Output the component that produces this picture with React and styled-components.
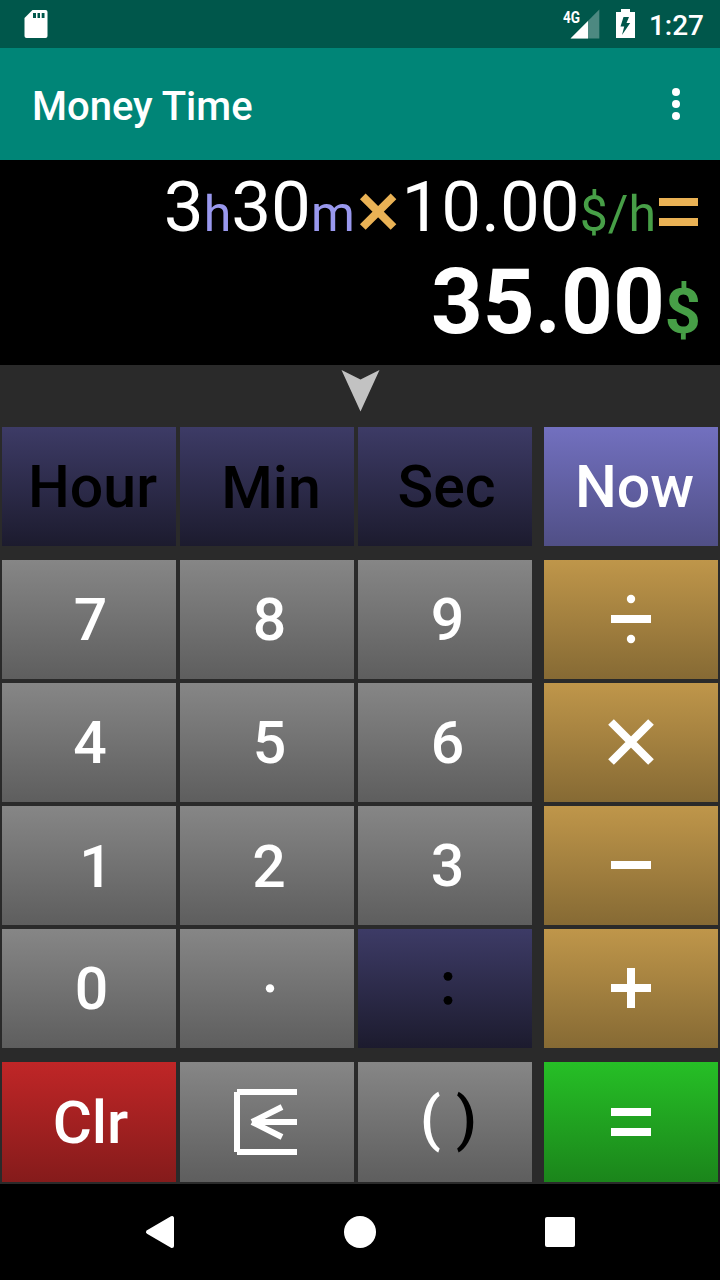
import React from 'react'
import styled, { createGlobalStyle } from 'styled-components'

const gradients = {
  gray: '#868686, #5e5e5e',
  dim: '#3d3b66, #1c1b2e',
  now: '#7270bf, #504f86',
  gold: '#bf964a, #866a34',
  red: '#c02627, #851b1b',
  green: '#26bf26, #1b851b',
}

const CalcKey = ({ tone = 'gray', text, x, y, dark, tall, children }) => (
  <Key $tone={tone} $dark={dark} $tall={tall}>
    {text ? (
      <Label $x={x} $y={y} $big={text === 'Clr'}>
        {text}
      </Label>
    ) : (
      children
    )}
  </Key>
)

const Sign = ({ d }) => (
  <svg width="60" height="60" viewBox="-30 -30 60 60">
    <path d={d} stroke="currentColor" strokeWidth="8" fill="none" />
  </svg>
)

const App = () => {
  return (
    <>
      <GlobalStyle />
      <Screen>
        <StatusBar>
          <svg width="24" height="28" viewBox="0 0 24 28">
            <path
              d="M8.500 0H21.500a2 2 0 0 1 2 2v24a2 2 0 0 1-2 2H2.500a2 2 0 0 1-2-2V8z"
              fill="#fff"
            />
            <path d="M9 3h3v5H9zM13.500 3h2.500v5h-2.500zM17.700 3h2.800v5h-2.800z" fill="#00574b" />
          </svg>
          <StatusRight>
            <SignalBox>
              <Network>4G</Network>
              <svg width="30" height="30" viewBox="0 0 30 30">
                <path d="M29.300 0.500V29.500H0.500z" fill="#fff" opacity="0.3" />
                <path d="M18 12V29.500H0.500z" fill="#fff" />
              </svg>
            </SignalBox>
            <svg width="19" height="30" viewBox="0 0 19 30">
              <path d="M5 0h9v3h5v26H0V3h5z" fill="#fff" />
              <path d="M7.500 8L4.500 17.500H8.200L6 26 14.200 14H10.500L13 8z" fill="#00574b" />
            </svg>
            <Clock>1:27</Clock>
          </StatusRight>
        </StatusBar>

        <AppBar>
          <Title>Money Time</Title>
          <svg width="8" height="32" viewBox="0 0 8 32">
            <circle cx="4" cy="4" r="4" fill="#fff" />
            <circle cx="4" cy="16" r="4" fill="#fff" />
            <circle cx="4" cy="28" r="4" fill="#fff" />
          </svg>
        </AppBar>

        <Display>
          <Expression>
            <span>3</span>
            <Unit $color="#9998ee">h</Unit>
            <span>30</span>
            <Unit $color="#9998ee">m</Unit>
            <Operator width="46.5" height="38" viewBox="0 0 46.5 38">
              <path d="M7.800 3.300L38.500 34M38.500 3.300L7.800 34" stroke="#eab255" strokeWidth="8" />
            </Operator>
            <span>10.00</span>
            <Unit $color="#479f47">$/h</Unit>
            <Operator width="44" height="38" viewBox="0 0 44 38">
              <path d="M3 9H42M3 29H42" stroke="#eab255" strokeWidth="8" />
            </Operator>
          </Expression>
          <Result>
            <span>35.00</span>
            <ResultUnit>$</ResultUnit>
          </Result>
        </Display>

        <Handle>
          <svg width="40" height="44" viewBox="0 0 40 44">
            <path d="M1.500 1L20.500 10.500 39.500 1 20.500 42.500z" fill="#c2c2c2" />
          </svg>
        </Handle>

        <Keypad>
          <KeyRow>
            <CalcKey tone="dim" dark text="Hour" x={3.5} y={1} />
            <CalcKey tone="dim" dark text="Min" x={4} y={2} />
            <CalcKey tone="dim" dark text="Sec" x={1.5} y={1} />
            <CalcKey tone="now" text="Now" x={3.5} y={1} />
          </KeyRow>
          <Numbers>
            <KeyRow>
              <CalcKey text="7" x={1.5} y={1} />
              <CalcKey text="8" x={2.5} y={1} />
              <CalcKey text="9" x={2.5} y={1} />
              <CalcKey tone="gold">
                <svg width="60" height="60" viewBox="-30 -30 60 60">
                  <path d="M-20 0H20" stroke="#fff" strokeWidth="8" />
                  <circle cy="-20" r="4.2" fill="#fff" />
                  <circle cy="20" r="4.2" fill="#fff" />
                </svg>
              </CalcKey>
            </KeyRow>
            <KeyRow>
              <CalcKey text="4" x={1} y={1} />
              <CalcKey text="5" x={2.5} y={1} />
              <CalcKey text="6" x={2.5} y={1} />
              <CalcKey tone="gold">
                <Sign d="M-20 -20L20 20M20 -20L-20 20" />
              </CalcKey>
            </KeyRow>
            <KeyRow>
              <CalcKey text="1" x={7} y={2} />
              <CalcKey text="2" x={2} y={2} />
              <CalcKey text="3" x={2.5} y={1} />
              <CalcKey tone="gold">
                <Sign d="M-20 0H20" />
              </CalcKey>
            </KeyRow>
            <KeyRow>
              <CalcKey text="0" x={2.5} y={1} />
              <CalcKey>
                <svg width="60" height="60" viewBox="-30 -30 60 60">
                  <circle cx="3" cy="0.400" r="4.200" fill="#fff" />
                </svg>
              </CalcKey>
              <CalcKey tone="dim" dark>
                <svg width="60" height="60" viewBox="-30 -30 60 60">
                  <circle cx="3" cy="-11.700" r="4.400" />
                  <circle cx="3" cy="12.300" r="4.400" />
                </svg>
              </CalcKey>
              <CalcKey tone="gold">
                <Sign d="M-20 0H20M0 -20V20" />
              </CalcKey>
            </KeyRow>
          </Numbers>
          <KeyRow>
            <CalcKey tone="red" tall text="Clr" x={1.5} y={1} />
            <CalcKey tall>
              <svg width="70" height="70" viewBox="-35 -35 70 70">
                <path
                  d="M30 -30H-30M-30 -30V30M-30 30H30M30 0H-15M15 -15L-15 0M-15 0L15 15"
                  stroke="#fff"
                  strokeWidth="6"
                  fill="none"
                />
              </svg>
            </CalcKey>
            <CalcKey tall>
              <Parens>
                <span>(</span>
                <ClosedParen>)</ClosedParen>
              </Parens>
            </CalcKey>
            <CalcKey tone="green" tall>
              <Sign d="M-20 -10H20M-20 10H20" />
            </CalcKey>
          </KeyRow>
        </Keypad>

        <NavBar>
          <svg width="32" height="36" viewBox="0 0 32 36">
            <path
              d="M4 18L28 4V32z"
              fill="#fff"
              stroke="#fff"
              strokeWidth="4"
              strokeLinejoin="round"
            />
          </svg>
          <Home />
          <Recent />
        </NavBar>
      </Screen>
    </>
  )
}

const GlobalStyle = createGlobalStyle`
  body {
    margin: 0;
    background: #2a2a2a;
    font-family: Roboto, 'Liberation Sans', sans-serif;
  }
  svg {
    display: block;
  }
`
const Screen = styled.div`
  display: flex;
  flex-direction: column;
  width: 720px;
  height: 1280px;
  overflow: hidden;
  background: #2a2a2a;
  color: #fff;
`
const StatusBar = styled.div`
  display: flex;
  justify-content: space-between;
  align-items: center;
  box-sizing: border-box;
  height: 48px;
  padding: 0 16px 0 24px;
  background: #00574b;
`
const StatusRight = styled.div`
  display: flex;
  align-items: center;
`
const SignalBox = styled.div`
  display: flex;
  margin-right: 16px;
`
const Network = styled.span`
  width: 7px;
  font-size: 17px;
  line-height: 16px;
  font-weight: 700;
  white-space: nowrap;
  transform: scaleX(0.8);
  transform-origin: left;
`
const Clock = styled.span`
  margin: 3px 0 0 14px;
  font-size: 28px;
  line-height: 32px;
  font-weight: 500;
`
const AppBar = styled.div`
  display: flex;
  justify-content: space-between;
  align-items: center;
  box-sizing: border-box;
  height: 112px;
  padding: 0 40px 0 32px;
  background: #008577;
`
const Title = styled.h1`
  margin: 6px 0 0;
  font-size: 40px;
  line-height: 48px;
  font-weight: 500;
`
const Display = styled.div`
  box-sizing: border-box;
  height: 205px;
  padding: 5px 20px 0 0;
  background: #000;
`
const Expression = styled.div`
  display: flex;
  justify-content: flex-end;
  align-items: baseline;
  font-size: 71px;
  line-height: 84px;
`
const Unit = styled.span`
  font-size: 50px;
  color: ${(props) => props.$color};
`
const Operator = styled.svg`
  flex: none;
`
const Result = styled.div`
  display: flex;
  justify-content: flex-end;
  align-items: baseline;
  margin-right: -1px;
  font-size: 90.5px;
  line-height: 92px;
  font-weight: 700;
`
const ResultUnit = styled.span`
  font-size: 63px;
  color: #479f47;
`
const Handle = styled.div`
  display: flex;
  justify-content: center;
  box-sizing: border-box;
  height: 62px;
  padding-top: 4px;
`
const Keypad = styled.div`
  display: flex;
  flex-direction: column;
  gap: 14px;
  height: 757px;
  padding: 0 2px;
`
const Numbers = styled.div`
  display: flex;
  flex-direction: column;
  gap: 4px;
`
const KeyRow = styled.div`
  display: grid;
  grid-template-columns: repeat(3, 174px) 182px;
  column-gap: 4px;
`
const Key = styled.div`
  display: flex;
  justify-content: center;
  align-items: center;
  box-sizing: border-box;
  height: ${(props) => (props.$tall ? 120 : 119)}px;
  padding-bottom: ${(props) => (props.$tall ? 0 : 1)}px;
  background: linear-gradient(${(props) => gradients[props.$tone]});
  color: ${(props) => (props.$dark ? '#000' : '#fff')};
  &:last-child {
    margin-left: 8px;
  }
`
const Label = styled.span`
  font-size: ${(props) => (props.$big ? 60 : 59)}px;
  line-height: 58px;
  font-weight: 500;
  transform: translate(${(props) => props.$x}px, ${(props) => props.$y}px);
`
const Parens = styled.div`
  display: flex;
  gap: 15px;
  font-size: 60px;
  line-height: 60px;
  font-weight: 500;
  transform: translate(3.5px, -3px);
`
const ClosedParen = styled.span`
  color: #000;
`
const NavBar = styled.div`
  display: flex;
  justify-content: space-between;
  align-items: center;
  box-sizing: border-box;
  height: 96px;
  padding: 0 145px 0 142px;
  background: #000;
  svg {
    margin-left: 2px;
    margin-right: -2px;
  }
`
const Home = styled.div`
  width: 32px;
  height: 32px;
  border-radius: 50%;
  background: #fff;
`
const Recent = styled.div`
  width: 30px;
  height: 30px;
  border-radius: 2px;
  background: #fff;
`
export default App
